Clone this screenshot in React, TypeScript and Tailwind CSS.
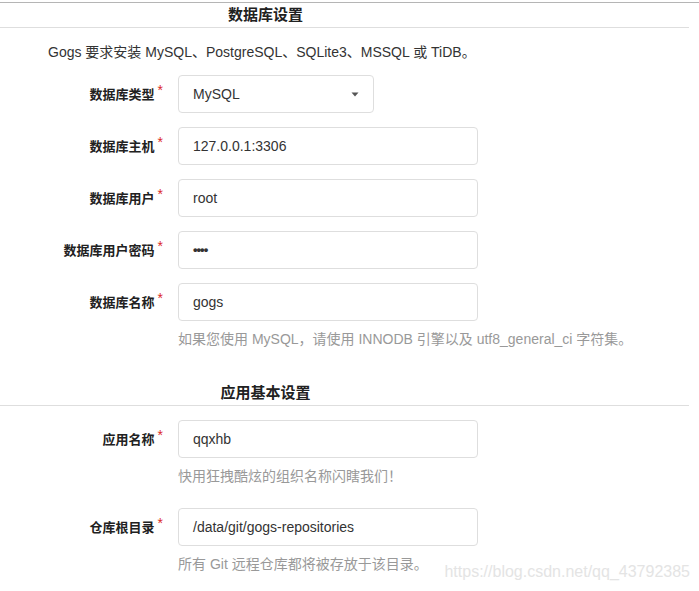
import React from "react";

const font = { fontFamily: '"Liberation Sans", "Noto Sans CJK SC", sans-serif' };

function Label({ text }: { text: string }) {
  return (
    <div className="w-[178px] shrink-0 pr-[15px] flex justify-end items-center">
      <span className="text-[13px] font-bold text-[#212121] leading-none">{text}</span>
      <span className="text-[14px] text-[#db2828] leading-none ml-[3px] -mt-[8px]">*</span>
    </div>
  );
}

function Input({ value, small }: { value: string; small?: boolean }) {
  return (
    <div className="w-[300px] h-[38px] border border-[#dedede] rounded-[4px] flex items-center pl-[14px] text-[14px] text-[#333]">
      {small ? <span className="text-[13px] font-bold tracking-[-1px]">••••</span> : value}
    </div>
  );
}

function Row({ label, children, className }: { label: string; children: React.ReactNode; className?: string }) {
  return (
    <div className={"flex items-center h-[38px] " + (className ?? "")}>
      <Label text={label} />
      {children}
    </div>
  );
}

function Header({ text, className }: { text: string; className?: string }) {
  return (
    <div className={"w-[689px] border-b border-[#dedede] " + (className ?? "")}>
      <div className="w-[531px] h-[24px] text-center text-[15px] font-bold text-[#212121] leading-[24px]">{text}</div>
    </div>
  );
}

export default function App() {
  return (
    <div className="relative w-[699px] h-[591px] bg-white overflow-hidden pt-[2px]" style={font}>
      <div className="border-t border-[#b5b5b5]" />
      <Header text="数据库设置" />
      <div className="mt-[14px] pl-[48px] text-[14px] leading-[20px] text-[#333]">
        Gogs 要求安装 MySQL、PostgreSQL、SQLite3、MSSQL 或 TiDB。
      </div>
      <Row label="数据库类型" className="mt-[13px]">
        <div className="w-[196px] h-[38px] border border-[#dedede] rounded-[4px] flex items-center justify-between pl-[14px] pr-[14px] text-[14px] text-[#333]">
          <span>MySQL</span>
          <svg width="8" height="5" viewBox="0 0 8 5">
            <path d="M0.5 0.5 L7.5 0.5 L4 4.5 Z" fill="#555" />
          </svg>
        </div>
      </Row>
      <Row label="数据库主机" className="mt-[14px]">
        <Input value="127.0.0.1:3306" />
      </Row>
      <Row label="数据库用户" className="mt-[14px]">
        <Input value="root" />
      </Row>
      <Row label="数据库用户密码" className="mt-[14px]">
        <Input value="" small />
      </Row>
      <Row label="数据库名称" className="mt-[14px]">
        <Input value="gogs" />
      </Row>
      <div className="mt-[8px] pl-[178px] text-[14px] leading-[20px] text-[#999]">
        如果您使用 MySQL，请使用 INNODB 引擎以及 utf8_general_ci 字符集。
      </div>
      <Header text="应用基本设置" className="mt-[32px]" />
      <Row label="应用名称" className="mt-[14px]">
        <Input value="qqxhb" />
      </Row>
      <div className="mt-[8px] pl-[178px] text-[14px] leading-[20px] text-[#999]">
        快用狂拽酷炫的组织名称闪瞎我们！
      </div>
      <Row label="仓库根目录" className="mt-[22px]">
        <Input value="/data/git/gogs-repositories" />
      </Row>
      <div className="mt-[8px] pl-[178px] text-[14px] leading-[20px] text-[#999]">
        所有 Git 远程仓库都将被存放于该目录。
      </div>
      <div className="absolute right-[9px] top-[562px] text-[16px] leading-[20px] text-[#e4e4e4] whitespace-nowrap" style={{ fontFamily: '"Liberation Sans", sans-serif' }}>
        https://blog.csdn.net/qq_43792385
      </div>
    </div>
  );
}
